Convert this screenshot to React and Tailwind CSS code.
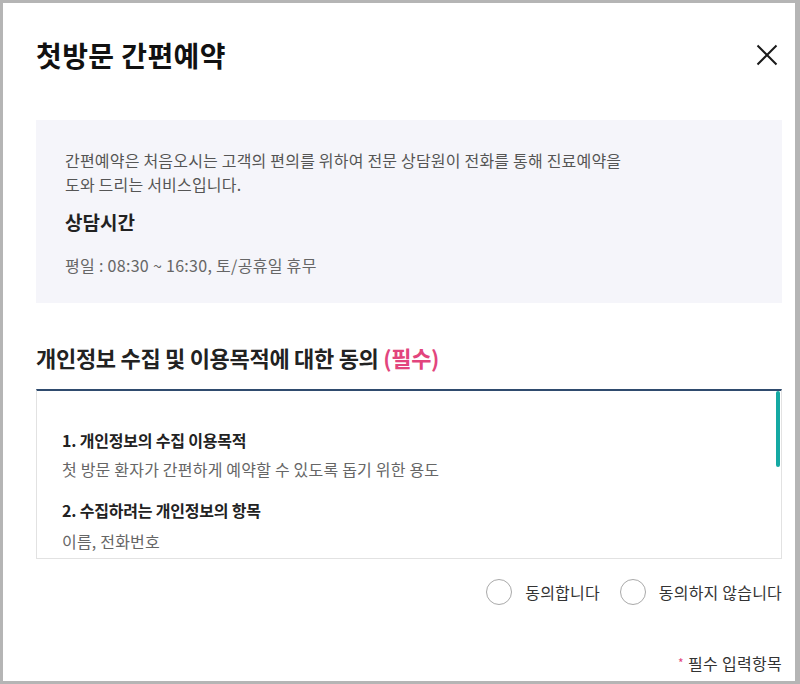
import { useState } from 'react';

const FONT = { fontFamily: '"Noto Sans CJK KR", "Noto Sans", sans-serif' };

const TERMS = [
  ['1. 개인정보의 수집 이용목적', '첫 방문 환자가 간편하게 예약할 수 있도록 돕기 위한 용도'],
  ['2. 수집하려는 개인정보의 항목', '이름, 전화번호'],
];

function Radio({ label, checked, onClick }) {
  return (
    <button onClick={onClick} className="flex items-center gap-[13px]">
      <span className="w-[26px] h-[26px] rounded-full border-[1.5px] border-[#a9a9a9] bg-white flex items-center justify-center">
        {checked && <span className="w-[12px] h-[12px] rounded-full bg-[#2f4b6e]" />}
      </span>
      <span className="text-[16px] leading-[22px] text-[#333] tracking-[0.2px]">{label}</span>
    </button>
  );
}

export default function App() {
  const [agree, setAgree] = useState(null);

  return (
    <div style={FONT} className="w-[800px] h-[684px] bg-white border-t-[3px] border-l-[3px] border-r-[5px] border-b-[3px] border-[#b5b5b5] overflow-hidden">
      <div className="pl-[33px] pr-[13px] pt-[32px]">
        {/* header */}
        <div className="flex items-center justify-between h-[40px]">
          <h1 className="text-[28px] leading-[40px] font-bold text-[#111] tracking-[0.4px]">첫방문 간편예약</h1>
          <button className="w-[22px] h-[22px] mr-[4px]">
            <svg viewBox="0 0 22 22" width="22" height="22" fill="none" stroke="#1a1a1a" strokeWidth="2">
              <path d="M1.5 1.5 L20.5 20.5 M20.5 1.5 L1.5 20.5" />
            </svg>
          </button>
        </div>

        {/* info */}
        <div className="mt-[45px] bg-[#f5f5fa] pl-[29px] pr-[20px] pt-[28px] pb-[26px]">
          <p className="text-[16px] leading-[24px] text-[#555] tracking-[0.2px]">
            간편예약은 처음오시는 고객의 편의를 위하여 전문 상담원이 전화를 통해 진료예약을<br />
            도와 드리는 서비스입니다.
          </p>
          <h3 className="mt-[13px] text-[19px] leading-[26px] font-bold text-[#222]">상담시간</h3>
          <p className="mt-[18px] text-[16px] leading-[24px] text-[#666] tracking-[0.3px]">평일 : 08:30 ~ 16:30, 토/공휴일 휴무</p>
        </div>

        {/* consent */}
        <h2 className="mt-[39px] text-[22px] leading-[30px] font-bold text-[#222] tracking-[-0.3px]">
          개인정보 수집 및 이용목적에 대한 동의 <span className="text-[#e2457d]">(필수)</span>
        </h2>
        <div className="relative mt-[17px] h-[170px] border-t-2 border-t-[#2f4b6e] border-x border-b border-x-[#e2e2e2] border-b-[#e2e2e2] overflow-hidden">
          <div className="pl-[25px] pr-[30px] pt-[38px]">
            {TERMS.map(([t, d], i) => (
              <div key={t} className={i > 0 ? 'mt-[19px]' : ''}>
                <p className="text-[16px] leading-[22px] font-bold text-[#222] tracking-[-0.2px]">{t}</p>
                <p className={(i === 0 ? 'mt-[7px]' : 'mt-[9px]') + ' text-[16px] leading-[22px] text-[#666] tracking-[0.2px]'}>{d}</p>
              </div>
            ))}
          </div>
          <div className="absolute right-[1px] top-0 w-[4px] h-[76px] rounded-full bg-[#15a9a3]" />
        </div>

        <div className="mt-[20px] flex justify-end gap-[20px]">
          <Radio label="동의합니다" checked={agree === 'y'} onClick={() => setAgree('y')} />
          <Radio label="동의하지 않습니다" checked={agree === 'n'} onClick={() => setAgree('n')} />
        </div>

        <p className="mt-[47px] text-right text-[16px] leading-[22px] text-[#333] tracking-[0.3px]">
          <span className="text-[#e2457d] text-[12px] align-[2px] mr-[4px]">*</span>필수 입력항목
        </p>
      </div>
    </div>
  );
}
